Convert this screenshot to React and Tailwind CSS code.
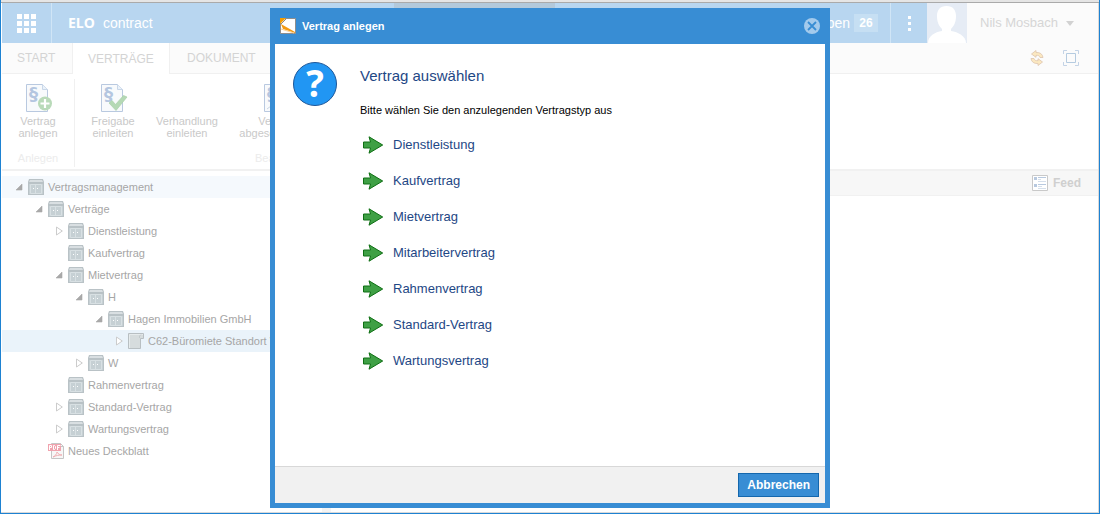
import React from "react";

function Cabinet() {
  return (
    <svg width="16" height="16" viewBox="0 0 16 16" aria-hidden="true" className="shrink-0">
      <path d="M1 0h14l1 3v13H0V3z" fill="#b9c2c6" />
      <path d="M2 1h12l1 2H1z" fill="#d9dfe2" />
      <path d="M1 5h14v10H1z" fill="#c6d0d4" />
      <path d="M2.500 14.500v-9h11v9zM7.500 5v9" fill="none" stroke="#d8e0e3" />
      <path d="M5 9h1v1H5zM9 9h1v1H9z" fill="#fff" />
    </svg>
  );
}

function Folder() {
  return (
    <svg width="16" height="16" viewBox="0 0 16 16" aria-hidden="true" className="shrink-0">
      <path d="M.5.5h15v5h-3v10H.5z" fill="#d6dcdd" stroke="#b8bfc2" />
      <path d="M1.500 15V1.500H15" fill="none" stroke="#e6ebec" />
      <path d="M11.500 5V3l1.500-1.500" fill="none" stroke="#c3cacc" />
    </svg>
  );
}

function Pdf() {
  return (
    <svg width="16" height="16" viewBox="0 0 16 16" aria-hidden="true" className="shrink-0">
      <path d="M3.500 8V.5h9l3 3v12h-12z" fill="#f7f7f7" stroke="#c5c5c5" />
      <path d="M12.500.5v3h3" fill="none" stroke="#c5c5c5" />
      <path d="M0 1h13v7H0z" fill="#f0a3ae" />
      <path d="M1.500 7V2.500h2v2h-2M5.500 2.500h1l1 1v2l-1 1h-1zM9.500 7V2.500h3M9.500 4.500h2" fill="none" stroke="#fff" />
      <path d="M5 14c2-1 4-3 4-5 1 2 3 3 5 3-3 0-6 .5-9 2z" fill="none" stroke="#f0b0b4" />
    </svg>
  );
}

function Toggle({ state }) {
  return (
    <svg width="9" height="10" viewBox="0 0 9 10" aria-hidden="true" className="shrink-0">
      {state === "open" && <path d="M7 2v6H1z" fill="#a9a9a9" stroke="#a9a9a9" strokeWidth=".6" />}
      {state === "closed" && <path d="M1.500 1v8L7.300 5z" fill="#fff" stroke="#ccc" />}
    </svg>
  );
}

function ContractDoc({ badge }) {
  return (
    <svg width="28" height="28" viewBox="0 0 28 28" aria-hidden="true">
      <path d="M.5.5h16l5 5v22H.5z" fill="#f8fafc" stroke="#b9c9e0" />
      <path d="M16.500.5v5h5" fill="#eaf2fa" stroke="#c9d7e8" />
      <text x="7.500" y="16" textAnchor="middle" fill="#b4c6e0" fontSize="18" fontWeight="700" fontFamily="DejaVu Sans, sans-serif">§</text>
      {badge === "add" && (
        <g>
          <circle cx="19" cy="19.500" r="7" fill="#b9dab9" />
          <path d="M19 15v9M14.500 19.500h9" stroke="#fff" strokeWidth="2.200" />
        </g>
      )}
      {badge === "check" && <path d="M8 19l3-2.500 3.500 4 8-9L26 13 15 26.500z" fill="#b5d9b5" stroke="#a9d0a9" strokeWidth=".7" />}
      {badge === "close" && <path d="M3 25l4-3 4 3" fill="none" stroke="#c9d5e4" />}
    </svg>
  );
}

function RibbonButton({ badge, lines, className }) {
  return (
    <button type="button" className={"flex shrink-0 flex-col items-center text-[11px] leading-3 text-[#c9c9c9] " + className}>
      <span className="flex h-[31px] items-start pl-[3px]">{badge && <ContractDoc badge={badge} />}</span>
      <span>{lines[0]}</span>
      <span>{lines[1]}</span>
    </button>
  );
}

const tree = [
  { label: "Vertragsmanagement", indent: "pl-[13px]", state: "open", bg: "bg-[#f5f9fd]" },
  { label: "Verträge", indent: "pl-[33px]", state: "open" },
  { label: "Dienstleistung", indent: "pl-[53px]", state: "closed" },
  { label: "Kaufvertrag", indent: "pl-[53px]" },
  { label: "Mietvertrag", indent: "pl-[53px]", state: "open" },
  { label: "H", indent: "pl-[73px]", state: "open" },
  { label: "Hagen Immobilien GmbH", indent: "pl-[93px]", state: "open" },
  { label: "C62-Büromiete Standort Wien", indent: "pl-[113px]", state: "closed", icon: "folder", bg: "bg-[#eaf3fa]" },
  { label: "W", indent: "pl-[73px]", state: "closed" },
  { label: "Rahmenvertrag", indent: "pl-[53px]" },
  { label: "Standard-Vertrag", indent: "pl-[53px]", state: "closed" },
  { label: "Wartungsvertrag", indent: "pl-[53px]", state: "closed" },
  { label: "Neues Deckblatt", indent: "pl-[33px]", icon: "pdf" },
];

const types = ["Dienstleistung", "Kaufvertrag", "Mietvertrag", "Mitarbeitervertrag", "Rahmenvertrag", "Standard-Vertrag", "Wartungsvertrag"];

function TopBar() {
  return (
    <header className="flex h-10 bg-[#b8d6f0] text-white">
      <button type="button" aria-label="Apps" className="flex w-[50px] items-center justify-center border-r border-[#d0e5f6]">
        <svg width="19" height="19" viewBox="0 0 19 19" fill="#fff" aria-hidden="true">
          <path d="M0 0h5v5H0zM7 0h5v5H7zM14 0h5v5h-5zM0 7h5v5H0zM7 7h5v5H7zM14 7h5v5h-5zM0 14h5v5H0zM7 14h5v5H7zM14 14h5v5h-5z" />
        </svg>
      </button>
      <div className="flex w-[342px] items-center gap-2 pl-4 text-sm">
        <span className="font-['Open_Sans',sans-serif] font-bold">ELO</span>
        <span>contract</span>
      </div>
      <div className="w-[161px] bg-[#b3c9db]" />
      <div className="flex-1" />
      <button type="button" className="flex w-40 items-center justify-end gap-1 border-r border-[#d0e5f6] pr-3 text-sm">
        Aufgaben <span className="flex h-[18px] w-6 items-center justify-center bg-[#c6dff3] text-xs font-bold">26</span>
      </button>
      <button type="button" aria-label="Mehr" className="flex w-9 items-center justify-center">
        <svg width="3" height="15" viewBox="0 0 3 15" fill="#fff" aria-hidden="true">
          <path d="M0 0h3v3H0zM0 6h3v3H0zM0 12h3v3H0z" />
        </svg>
      </button>
      <svg width="40" height="40" viewBox="0 0 40 40" aria-hidden="true" className="shrink-0">
        <path d="M0 0h40v40H0z" fill="#e6ecf5" />
        <path d="M19.500 3c6.500 0 9.500 4 9.500 10 0 6-2 10-5 13v2c7 1 15 5 15 12H1c0-7 7-11 14-12v-2c-3-3-5-7-5-13 0-6 3-10 9.500-10z" fill="#fff" />
      </svg>
      <button type="button" className="flex w-[131px] items-center gap-2 bg-[#fbfbfb] pl-[13px] text-[13px] text-[#d6d6d6]">
        Nils Mosbach
        <svg width="8" height="5" viewBox="0 0 8 5" fill="#d2d2d2" aria-hidden="true"><path d="M0 0h8L4 5z" /></svg>
      </button>
    </header>
  );
}

function Tabs() {
  return (
    <nav className="flex h-[31px] text-xs text-[#d4d4d4]">
      <a href="#start" className="flex w-[71px] items-center border-r border-b border-[#f0f0f0] bg-[#fbfbfb] pl-[15px]">START</a>
      <a href="#vertraege" className="flex w-24 items-center pl-[15px]">VERTRÄGE</a>
      <a href="#dokument" className="flex flex-1 items-center border-b border-l border-[#f0f0f0] bg-[#fbfbfb] pl-[17px]">DOKUMENT</a>
      <div className="flex items-center gap-[19px] border-b border-[#f0f0f0] bg-[#fbfbfb] pr-[19px]">
        <button type="button" aria-label="Aktualisieren">
          <svg width="14" height="16" viewBox="0 0 14 16" fill="#fbe8c0" stroke="#e0c8b2" strokeWidth=".9" aria-hidden="true">
            <path d="M6 .5v2c4-.3 6.500 1.500 7 5H10C9.500 5.700 8.500 5.300 6 5.300v2L1.500 4z" />
            <path d="M8 15.500v-2c-4 .3-6.500-1.500-7-5h3c.5 1.800 1.500 2.200 4 2.200v-2l4.500 3.300z" />
          </svg>
        </button>
        <button type="button" aria-label="Vollbild">
          <svg width="16" height="16" viewBox="0 0 16 16" fill="none" aria-hidden="true">
            <path d="M.5 4V.5H4M12 .5h3.500V4M15.500 12v3.500H12M4 15.500H.5V12" stroke="#c3d3e6" />
            <path d="M3.500 3.500h9v9h-9z" stroke="#b5cbe0" />
          </svg>
        </button>
      </div>
    </nav>
  );
}

function Dialog() {
  return (
    <div className="fixed inset-0 flex justify-center pt-2 pb-[6px]">
      <section role="dialog" aria-label="Vertrag anlegen" className="flex w-[560px] flex-col border-[5px] border-t-0 border-[#388dd4] bg-white">
        <header className="flex h-9 shrink-0 items-center bg-[#388dd4] px-[5px] text-white">
          <svg width="16" height="16" viewBox="0 0 16 16" aria-hidden="true">
            <path d="M.5.5h15v15H.5z" fill="#fff" stroke="#8e8e8e" />
            <path d="M0 0h6L0 6z" fill="#f59c00" />
            <path d="M1 6l14 8v1L3 11z" fill="#f39a13" />
            <path d="M1 6L6 1" stroke="#888" />
            <path d="M1 11l13 4" stroke="#f9cf93" />
          </svg>
          <h1 className="flex-1 pl-[6px] text-[11px] font-bold">Vertrag anlegen</h1>
          <button type="button" aria-label="Schließen">
            <svg width="16" height="16" viewBox="0 0 16 16" aria-hidden="true">
              <circle cx="8" cy="8" r="8" fill="#a3caec" />
              <path d="M4 4l8 8M12 4l-8 8" stroke="#388dd4" strokeWidth="1.800" />
            </svg>
          </button>
        </header>
        <div className="flex flex-1 gap-[23px] pt-[18px] pl-[18px]">
          <span aria-hidden="true" className="flex h-11 w-11 shrink-0 justify-center rounded-full border border-[#1e5799] bg-[#2196f3] font-['Open_Sans',sans-serif] text-[37px] leading-10 font-bold text-white">?</span>
          <div className="flex flex-col items-start">
            <h2 className="pt-1 text-[15px] leading-5 text-[#1e4785]">Vertrag auswählen</h2>
            <p className="pt-4 text-[11px] leading-4 text-black">Bitte wählen Sie den anzulegenden Vertragstyp aus</p>
            <ul className="pt-[9px]">
              {types.map((t) => (
                <li key={t}>
                  <a href="#auswahl" className="flex h-9 items-center gap-[9px] pl-[2px] text-[13px] text-[#1e4785]">
                    <svg width="22" height="18" viewBox="0 0 22 18" aria-hidden="true">
                      <path d="M1.500 6h7L7 .8 20.700 9 7 17.200 8.500 12h-7z" fill="#3fa045" stroke="#0f6f14" strokeLinejoin="round" />
                    </svg>
                    {t}
                  </a>
                </li>
              ))}
            </ul>
          </div>
        </div>
        <footer className="flex h-[37px] shrink-0 items-center justify-end border-t border-[#d8d8d8] bg-[#f1f1f1] pr-[6px]">
          <button type="button" className="h-6 border border-[#1467ad] bg-[#388dd4] px-2 text-xs font-bold text-white">Abbrechen</button>
        </footer>
      </section>
    </div>
  );
}

export default function App() {
  return (
    <div className="flex min-h-screen flex-col border-r border-b border-l border-[#1e82d2] bg-white font-['Liberation_Sans',Arial,sans-serif]">
      <div className="h-[3px] border-b border-[#aaaaaa] bg-[#e5e5e5]" />
      <div className="flex flex-1 flex-col border-r border-b border-[#d9d9d9] pl-px">
        <TopBar />
        <Tabs />
        <div className="flex h-[95px] items-start overflow-hidden pt-[5px]">
          <div className="flex h-[88px] w-[73px] flex-col items-center border-r border-[#f0f0f0] pt-[5px]">
            <RibbonButton badge="add" lines={["Vertrag", "anlegen"]} className="w-full" />
            <span className="pt-[13px] text-[11px] leading-3 text-[#ececec]">Anlegen</span>
          </div>
          <div className="flex flex-col pt-[5px]">
            <div className="flex">
              <RibbonButton badge="check" lines={["Freigabe", "einleiten"]} className="w-[76px]" />
              <RibbonButton lines={["Verhandlung", "einleiten"]} className="w-[72px]" />
              <RibbonButton badge="close" lines={["Vertrag", "abgeschlossen"]} className="w-[106px]" />
            </div>
            <span className="pt-[13px] pl-[180px] text-[11px] leading-3 text-[#ececec]">Bearbeiten</span>
          </div>
        </div>
        <main className="flex flex-1">
          <div className="w-80 overflow-hidden border-t-2 border-[#f1f1f1] pt-[5px]">
            <ul>
              {tree.map((n) => (
                <li key={n.label} className={"flex h-[22px] items-center text-[11px] whitespace-nowrap text-[#a6a6a6] " + n.indent + " " + (n.bg || "")}>
                  <Toggle state={n.state} />
                  <span className="pr-1 pl-1">{n.icon === "pdf" ? <Pdf /> : n.icon === "folder" ? <Folder /> : <Cabinet />}</span>
                  {n.label}
                </li>
              ))}
            </ul>
          </div>
          <div className="w-[9px] bg-[#f4f4f4]" />
          <div className="flex-1">
            <div className="flex h-[27px] items-center justify-end border-t-2 border-b border-[#f1f1f1] bg-[#f7f7f7] pr-[17px]">
              <a href="#feed" className="flex items-center gap-[5px] text-xs font-bold text-[#cfcfcf]">
                <svg width="16" height="16" viewBox="0 0 16 16" aria-hidden="true">
                  <path d="M.5.5h15v15H.5z" fill="#fff" stroke="#c9c9c9" />
                  <path d="M2 2h3v3H2zM2 9h3v3H2z" fill="#b8c9df" />
                  <path d="M6 2.500h8M6 9.500h8" stroke="#b8c9df" />
                  <path d="M6 4.500h3M6 6.500h8M6 11.500h4M6 13.500h8" stroke="#d5dfeb" />
                </svg>
                Feed
              </a>
            </div>
          </div>
        </main>
      </div>
      <Dialog />
    </div>
  );
}
